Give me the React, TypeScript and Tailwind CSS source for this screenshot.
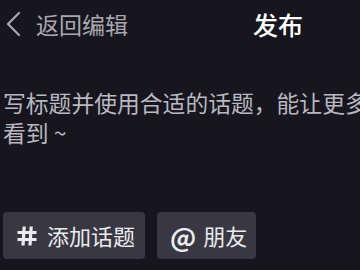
import React from "react";

const cjk = { fontFamily: '"Noto Sans CJK SC", "Noto Sans", sans-serif' };

export default function App() {
	return (
		<div className="w-[360px] h-[270px] bg-[#17161f] overflow-hidden flex flex-col" style={cjk}>
			{/* top bar */}
			<div className="h-[48px] flex items-center">
				<svg width="16" height="26" viewBox="0 0 16 26" className="ml-[5px] shrink-0">
					<path d="M14 2 L3 13 L14 24" fill="none" stroke="#a9a8b0" strokeWidth="2.2" strokeLinecap="round" strokeLinejoin="round" />
				</svg>
				<span className="ml-[15px] text-[23px] leading-none text-[#a9a8b0]">返回编辑</span>
				<span className="ml-auto mr-[57px] text-[25px] leading-none font-medium text-white">发布</span>
			</div>

			{/* caption hint */}
			<div className="mt-[40px] pl-[3px] text-[22.8px] leading-[30px] text-[#b9b8c0] whitespace-nowrap">
				<p>写标题并使用合适的话题，能让更多</p>
				<p>看到 ~</p>
			</div>

			{/* chips */}
			<div className="mt-auto mb-[11px] ml-[3px] flex gap-[12px]">
				<button className="h-[47px] w-[142px] rounded-[4px] bg-[#393842] flex items-center pl-[14px] text-[22px] text-[#ebebef]">
					<svg viewBox="0 0 20 20" className="w-[20px] h-[20px] mr-[10px] shrink-0">
						<path d="M7.2 0.5 L6 19.5 M14.2 0.5 L13 19.5 M0.5 6.5 H19.5 M0.5 13.5 H19.5" stroke="#ebebef" strokeWidth="3.2" fill="none" />
					</svg>
					<span>添加话题</span>
				</button>
				<button className="h-[47px] w-[99px] rounded-[4px] bg-[#393842] flex items-center pl-[13px] text-[22px] text-[#ebebef]">
					<span className="text-[26px] leading-none font-semibold mr-[7px]">@</span>
					<span>朋友</span>
				</button>
			</div>
		</div>
	);
}
